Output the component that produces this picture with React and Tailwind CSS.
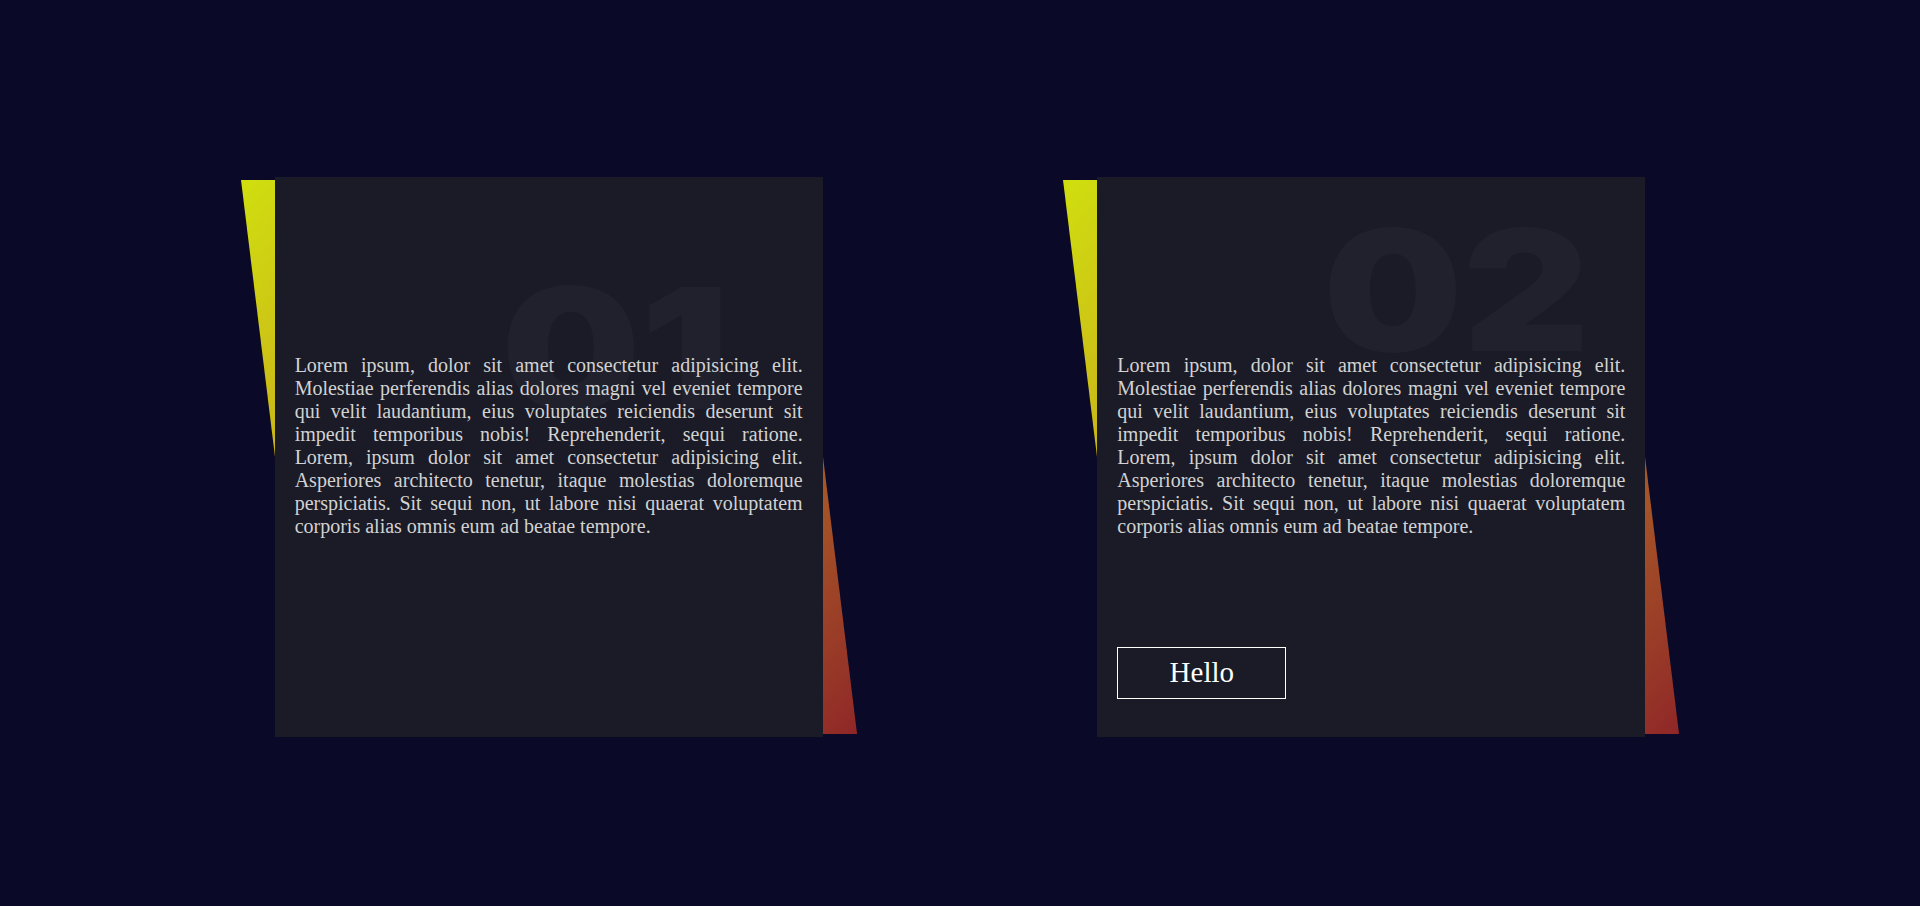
import React from "react";

const lorem =
  "Lorem ipsum, dolor sit amet consectetur adipisicing elit. Molestiae perferendis alias dolores magni vel eveniet tempore qui velit laudantium, eius voluptates reiciendis deserunt sit impedit temporibus nobis! Reprehenderit, sequi ratione. Lorem, ipsum dolor sit amet consectetur adipisicing elit. Asperiores architecto tenetur, itaque molestias doloremque perspiciatis. Sit sequi non, ut labore nisi quaerat voluptatem corporis alias omnis eum ad beatae tempore.";

const Card = ({ num, numTop, showButton }) => {
  return (
    <div className="relative w-[548px] h-[560px]">
      {/* gradient strip behind the card */}
      <div className="absolute left-0 right-0 top-[2.5px] bottom-[4px] skew-x-[7deg] bg-linear-to-br from-[#d0df0e] via-[#bf8a1c] to-[#8f2627]" />
      <div className="relative w-full h-full bg-[#1a1b26] p-5 flex flex-col overflow-hidden">
        <span
          className={`absolute left-[226px] ${numTop} origin-left scale-x-[1.17] text-[168px] leading-none font-black text-[#20212c] select-none`}
          style={{ fontFamily: "Inter, sans-serif" }}
        >
          {num}
        </span>
        <p
          className="relative mt-[157px] text-[20px] leading-[23px] text-[#d2d2d2] text-justify"
          style={{ fontFamily: '"Liberation Serif", serif' }}
        >
          {lorem}
        </p>
        {showButton && (
          <button
            className="relative mt-auto mb-[18px] w-[169px] h-[52px] border border-white text-white text-[29px] flex items-center justify-center"
            style={{ fontFamily: '"Liberation Serif", serif' }}
          >
            Hello
          </button>
        )}
      </div>
    </div>
  );
};

export default function App() {
  return (
    <div className="h-screen w-full bg-[#0a0a28] flex items-center justify-evenly pt-2">
      <Card num="01" numTop="top-[87px]" showButton={false} />
      <Card num="02" numTop="top-[29px]" showButton={true} />
    </div>
  );
}
